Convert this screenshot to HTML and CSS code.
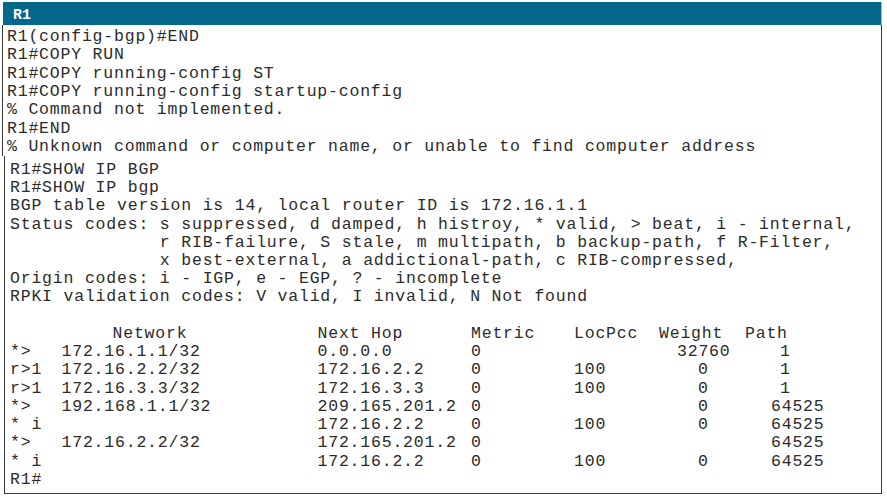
FILE: index.html
```html
<!DOCTYPE html>
<html>
<head>
<meta charset="utf-8">
<title>R1</title>
<link rel="stylesheet" href="styles.css">
</head>
<body>
<div class="window">
  <div class="titlebar">R1</div>
  <div class="term term-top"><pre class="lines">R1(config-bgp)#END
R1#COPY RUN
R1#COPY running-config ST
R1#COPY running-config startup-config
% Command not implemented.
R1#END
% Unknown command or computer name, or unable to find computer address</pre></div>
  <div class="term term-bottom">
<pre class="lines">R1#SHOW IP BGP
R1#SHOW IP bgp
BGP table version is 14, local router ID is 172.16.1.1
Status codes: s suppressed, d damped, h histroy, * valid, > beat, i - internal,
              r RIB-failure, S stale, m multipath, b backup-path, f R-Filter,
              x best-external, a addictional-path, c RIB-compressed,
Origin codes: i - IGP, e - EGP, ? - incomplete
RPKI validation codes: V valid, I invalid, N Not found
 </pre>
    <div class="bgp-table">
      <span></span><span class="net-h">Network</span><span>Next Hop</span><span>Metric</span><span>LocPcc</span><span>Weight</span><span>Path</span>
      <span>*&gt;</span><span>172.16.1.1/32</span><span>0.0.0.0</span><span>0</span><span></span><span class="w-big">32760</span><span class="p-one">1</span>
      <span>r&gt;1</span><span>172.16.2.2/32</span><span>172.16.2.2</span><span>0</span><span>100</span><span class="w-zero">0</span><span class="p-one">1</span>
      <span>r&gt;1</span><span>172.16.3.3/32</span><span>172.16.3.3</span><span>0</span><span>100</span><span class="w-zero">0</span><span class="p-one">1</span>
      <span>*&gt;</span><span>192.168.1.1/32</span><span>209.165.201.2</span><span>0</span><span></span><span class="w-zero">0</span><span class="p-as">64525</span>
      <span>* i</span><span></span><span>172.16.2.2</span><span>0</span><span>100</span><span class="w-zero">0</span><span class="p-as">64525</span>
      <span>*&gt;</span><span>172.16.2.2/32</span><span>172.165.201.2</span><span>0</span><span></span><span></span><span class="p-as">64525</span>
      <span>* i</span><span></span><span>172.16.2.2</span><span>0</span><span>100</span><span class="w-zero">0</span><span class="p-as">64525</span>
    </div>
<pre class="lines">R1#</pre>
  </div>
</div>
</body>
</html>
```
FILE: styles.css
```css
html, body {
  margin: 0;
  padding: 0;
  background: #ffffff;
}

.window {
  padding-top: 2px;
  width: 887px;
}

.titlebar {
  margin-left: 3px;
  width: 879px;
  height: 23px;
  box-sizing: border-box;
  padding: 5px 0 0 10px;
  background: #05678a;
  border-right: 1px solid #8cbfd0;
  color: #ffffff;
  font-family: "Liberation Mono", "Courier New", monospace;
  font-weight: bold;
  font-size: 15px;
  line-height: 18px;
}

.term {
  font-family: "Liberation Mono", "Courier New", monospace;
  font-size: 16.5px;
  letter-spacing: 0.8px;
  color: #2b2b2b;
  box-sizing: border-box;
}

.lines {
  margin: 0;
  font: inherit;
  white-space: pre;
}

.term-top {
  margin-left: 2px;
  width: 880px;
  border-left: 1px solid #3a3a3a;
  border-right: 1px solid #3a3a3a;
  padding: 3px 0 0 4px;
  line-height: 18.33px;
}

.term-bottom {
  margin-left: 4px;
  width: 878px;
  border-left: 1px solid #3a3a3a;
  border-right: 1px solid #3a3a3a;
  border-bottom: 1px solid #3a3a3a;
  padding: 4.5px 0 4px 5px;
  line-height: 18.24px;
}

.bgp-table {
  display: grid;
  grid-template-columns: 51.5px 256px 153.5px 103px 85px 86px auto;
  grid-auto-rows: 18.24px;
}

.bgp-table span {
  white-space: pre;
}

.bgp-table .net-h {
  padding-left: 51px;
}

.bgp-table .w-big {
  padding-left: 18px;
}

.bgp-table .w-zero {
  padding-left: 39px;
}

.bgp-table .p-one {
  padding-left: 35px;
}

.bgp-table .p-as {
  padding-left: 26px;
}
```
